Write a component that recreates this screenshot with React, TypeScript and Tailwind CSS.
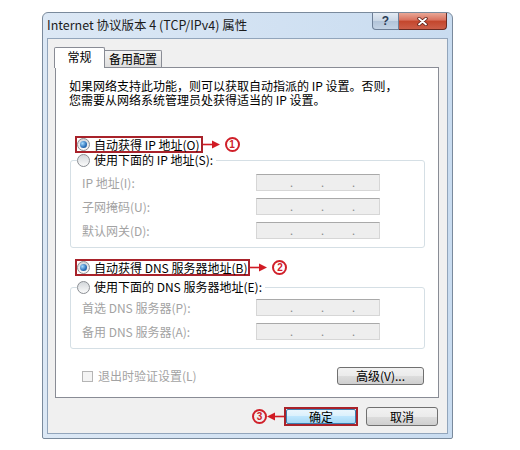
import React from 'react';

const Radio = ({ checked }: { checked?: boolean }) => (
  <span className="flex h-[13px] w-[13px] shrink-0 items-center justify-center rounded-full border border-[#8b8e93] bg-[linear-gradient(#d3d7db,#fbfbfb)]">
    {checked && (
      <span className="h-[7px] w-[7px] rounded-full bg-[radial-gradient(circle_at_35%_35%,#a6dcff,#2a6fb8_60%,#174a86)]" />
    )}
  </span>
);

const Arrow = ({ left }: { left?: boolean }) => (
  <svg width="17" height="9" viewBox="0 0 17 9" className={left ? 'shrink-0 rotate-180' : 'shrink-0'}>
    <line x1="0" y1="4.5" x2="11" y2="4.5" stroke="#d11b24" strokeWidth="1.6" />
    <polygon points="9,0.5 17,4.5 9,8.5" fill="#d11b24" />
  </svg>
);

const Num = ({ n }: { n: string }) => (
  <span className="flex h-[15px] w-[15px] shrink-0 items-center justify-center rounded-full border-2 border-[#d0202a] font-['Liberation_Sans',sans-serif] text-[10px] font-bold leading-none text-[#d0202a]">
    {n}
  </span>
);

const Field = () => (
  <div className="flex h-[17px] w-[124px] items-end gap-[28px] border border-[#d6d6d6] border-t-[#a9a9a9] bg-[#eeeeee] pb-[2px] pl-[33px] text-[11px] leading-none text-[#8a8a8a]">
    <span className="w-[3px]">.</span>
    <span className="w-[3px]">.</span>
    <span className="w-[3px]">.</span>
  </div>
);

const Row = ({ label }: { label: string }) => (
  <div className="flex items-center">
    <span className="w-[174px] leading-none text-[#a3a3a3]">{label}</span>
    <Field />
  </div>
);

const App = () => {
  return (
    <div className="h-[450px] w-[520px] overflow-hidden bg-white pl-[42px] pt-[12px] font-['Noto_Sans_CJK_SC',sans-serif] text-[12px] text-black">
      <div className="flex h-[427px] w-[411px] flex-col rounded-t-[6px] rounded-b-[2px] border border-[#7a8a9c] bg-[linear-gradient(90deg,#dce8f5,#c9dcf0)] px-[4px] pb-[4px]">
        {/* title bar */}
        <div className="flex h-[25px] shrink-0">
          <span className="self-center text-[12.5px] leading-none text-[#1b1b1b]">Internet 协议版本 4 (TCP/IPv4) 属性</span>
          <div className="ml-auto mr-px flex">
            <div className="flex h-[17px] w-[27px] items-center justify-center rounded-bl-[4px] border border-t-0 border-[#6d7f97] bg-[linear-gradient(#e3ebf4,#c9d6e5_50%,#b1c3d8_50%,#c3d3e5)] font-['Liberation_Sans',sans-serif] text-[12px] font-bold leading-none text-[#2a3b55]">
              ?
            </div>
            <div className="flex h-[17px] w-[48px] items-center justify-center rounded-br-[4px] border border-l-0 border-t-0 border-[#6a2b22] bg-[linear-gradient(#e9a796,#d8705d_45%,#c3462c_50%,#cc5e48)]">
              <svg width="11" height="9" viewBox="0 0 11 9">
                <path d="M2 1.5 L9 7.5 M9 1.5 L2 7.5" stroke="#5a1c14" strokeWidth="3.4" strokeLinecap="round" />
                <path d="M2 1.5 L9 7.5 M9 1.5 L2 7.5" stroke="#ffffff" strokeWidth="1.8" strokeLinecap="round" />
              </svg>
            </div>
          </div>
        </div>

        {/* client */}
        <div className="flex flex-1 flex-col border border-[#92a5bb] bg-[#f0f0f0] pl-[7px] pt-[8px]">
          <div className="flex h-[20px] items-end">
            <div className="relative z-10 -mb-px ml-[-1px] flex h-[21px] w-[51px] justify-center rounded-t-[2px] border border-b-0 border-[#898c95] bg-white pt-[3px] leading-none">
              常规
            </div>
            <div className="flex h-[17px] w-[57px] justify-center rounded-tr-[2px] border border-b-0 border-l-0 border-[#898c95] bg-[linear-gradient(#f4f4f4,#dedede)] pt-[2px] leading-none">
              备用配置
            </div>
          </div>

          <div className="h-[331px] w-[384px] border border-[#898c95] bg-white">
            <p className="whitespace-nowrap pl-[13px] pt-[11px] leading-[14px]">
              如果网络支持此功能，则可以获取自动指派的 IP 设置。否则，
              <br />
              您需要从网络系统管理员处获得适当的 IP 设置。
            </p>

            <div className="ml-[19px] mt-[29px] flex items-center">
              <div className="flex h-[17px] items-center gap-[4px] border-2 border-[#a8222a] pr-px leading-none">
                <Radio checked />
                <span>自动获得 IP 地址(O)</span>
              </div>
              <Arrow />
              <span className="ml-[5px]">
                <Num n="1" />
              </span>
            </div>

            <div className="ml-[14px] mt-[7px] h-[88px] w-[355px] rounded-[3px] border border-[#d5dfe5]">
              <div className="-mt-[9px] ml-[6px] flex h-[16px] w-fit items-center gap-[4px] bg-white pr-[3px] leading-none">
                <Radio />
                <span>使用下面的 IP 地址(S):</span>
              </div>
              <div className="mt-[6px] flex flex-col gap-[7px] pl-[11px]">
                <Row label="IP 地址(I):" />
                <Row label="子网掩码(U):" />
                <Row label="默认网关(D):" />
              </div>
            </div>

            <div className="ml-[19px] mt-[11px] flex items-center">
              <div className="flex h-[17px] items-center gap-[4px] border-2 border-[#a8222a] pr-px leading-none">
                <Radio checked />
                <span>自动获得 DNS 服务器地址(B)</span>
              </div>
              <Arrow />
              <span className="ml-[5px]">
                <Num n="2" />
              </span>
            </div>

            <div className="ml-[14px] mt-[11px] h-[62px] w-[355px] rounded-[3px] border border-[#d5dfe5]">
              <div className="-mt-[9px] ml-[6px] flex h-[16px] w-fit items-center gap-[4px] bg-white pr-[3px] leading-none">
                <Radio />
                <span>使用下面的 DNS 服务器地址(E):</span>
              </div>
              <div className="mt-[4px] flex flex-col gap-[7px] pl-[11px]">
                <Row label="首选 DNS 服务器(P):" />
                <Row label="备用 DNS 服务器(A):" />
              </div>
            </div>

            <div className="mt-[18px] flex items-center justify-between pl-[26px] pr-[14px]">
              <div className="flex items-center gap-[5px] leading-none text-[#a3a3a3]">
                <span className="h-[11px] w-[11px] border border-[#b5b5b5] bg-[#f4f4f4]" />
                退出时验证设置(L)
              </div>
              <button className="flex h-[18px] w-[87px] items-center justify-center rounded-[3px] border border-[#707070] bg-[linear-gradient(#f2f2f2,#ebebeb_50%,#dddddd_50%,#cfcfcf)] leading-none">
                高级(V)...
              </button>
            </div>
          </div>

          <div className="mt-[9px] flex items-center justify-end pr-[9px]">
            <Num n="3" />
            <Arrow left />
            <div className="h-[19px] w-[74px] border-2 border-[#a8222a]">
              <button className="flex h-full w-full items-center justify-center rounded-[2px] border border-[#3c7fb1] bg-[linear-gradient(#eaf6fd,#d9f0fc_50%,#bee6fd_50%,#a7d9f5)] leading-none">
                确定
              </button>
            </div>
            <button className="ml-[8px] flex h-[19px] w-[72px] items-center justify-center rounded-[3px] border border-[#707070] bg-[linear-gradient(#f2f2f2,#ebebeb_50%,#dddddd_50%,#cfcfcf)] leading-none">
              取消
            </button>
          </div>
        </div>
      </div>
    </div>
  );
};

export default App;
